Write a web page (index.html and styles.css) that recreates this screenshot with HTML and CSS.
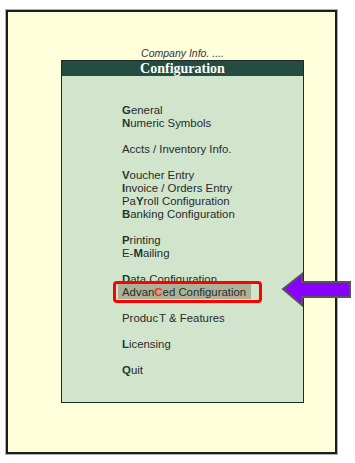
FILE: index.html
```html
<!DOCTYPE html>
<html>
<head>
<meta charset="utf-8">
<link rel="stylesheet" href="styles.css">
</head>
<body>
<div class="frame">
  <div class="menu-wrap">
    <div class="company">Company Info. ....</div>
    <div class="panel">
      <div class="panel-title">Configuration</div>
      <div class="panel-body">
        <div class="item"><b>G</b>eneral</div>
        <div class="item"><b>N</b>umeric Symbols</div>
        <div class="item gap">Accts / Inventory Info.</div>
        <div class="item gap"><b>V</b>oucher Entry</div>
        <div class="item"><b>I</b>nvoice / Orders Entry</div>
        <div class="item">Pa<b>Y</b>roll Configuration</div>
        <div class="item"><b>B</b>anking Configuration</div>
        <div class="item gap"><b>P</b>rinting</div>
        <div class="item">E-<b>M</b>ailing</div>
        <div class="item gap"><b>D</b>ata Configuration</div>
        <div class="item selected"><span class="hl">Advan<b class="red">C</b>ed Configuration</span><span class="redbox"></span></div>
        <div class="item gap">Produc<span class="key">T</span> &amp; Features</div>
        <div class="item gap"><b>L</b>icensing</div>
        <div class="item gap"><b>Q</b>uit</div>
      </div>
    </div>
  </div>
</div>
<svg class="arrow" width="75" height="38" viewBox="0 0 75 38">
  <path d="M3 18 L22 3 L22 11 L70 11 L70 26 L22 26 L22 34 Z" fill="#8a00ff" stroke="#555" stroke-width="2" stroke-linejoin="miter"/>
</svg>
</body>
</html>
```
FILE: styles.css
```css
html, body {
  margin: 0;
  padding: 0;
  background: #ffffff;
}
body {
  position: relative;
  width: 355px;
  height: 463px;
  overflow: hidden;
  font-family: "Liberation Sans", Arial, sans-serif;
}
.frame {
  margin: 10px 0 0 6px;
  width: 331px;
  height: 444px;
  box-sizing: border-box;
  border: 2px solid #1c1c1c;
  box-shadow: 0 0 0 1px #b0b0b0;
  background: #ffffdc;
  padding: 35px 0 0 53px;
}
.menu-wrap {
  width: 243px;
  display: flex;
  flex-direction: column;
}
.company {
  height: 13px;
  line-height: 13px;
  font-size: 10.5px;
  font-style: italic;
  color: #333;
  text-align: center;
}
.panel {
  border: 1px solid #1e2a26;
  background: #d0e5cc;
}
.panel-title {
  height: 15px;
  line-height: 15px;
  background: #244c40;
  color: #ffffff;
  font-family: "Liberation Serif", "Times New Roman", serif;
  font-weight: bold;
  font-size: 14px;
  text-align: center;
}
.panel-body {
  padding: 28px 0 25px 60px;
  display: flex;
  flex-direction: column;
}
.item {
  height: 13px;
  line-height: 13px;
  font-size: 11.4px;
  color: #2a2a2a;
  white-space: nowrap;
}
.item b {
  color: #1b3a32;
}
.key {
  color: #1b3a32;
  margin-left: 1px;
}
.gap { margin-top: 13px; }
.selected {
  position: relative;
}
.hl {
  background: #aab397;
  padding: 2px 5px 1px 4px;
  margin-left: -4px;
}
.hl .red {
  color: #ff2a1a;
}
.redbox {
  position: absolute;
  left: -9px;
  top: -5px;
  width: 149px;
  height: 22px;
  box-sizing: border-box;
  border: 3px solid #ff0000;
  border-radius: 4px;
}
.arrow {
  position: absolute;
  left: 280px;
  top: 271px;
}
```
